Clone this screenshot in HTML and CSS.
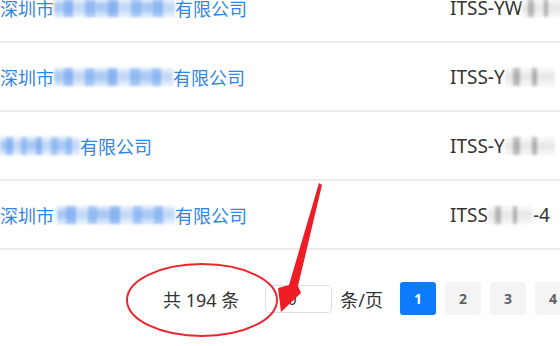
FILE: index.html
```html
<!DOCTYPE html>
<html lang="zh">
<head>
<meta charset="utf-8">
<link rel="stylesheet" href="styles.css">
</head>
<body>
<div class="page">
  <div class="table">
    <div class="row">
      <div class="cell name"><span>深圳市</span><span class="mosaic blue w121"></span><span>有限公司</span></div>
      <div class="cell code"><span>ITSS-YW</span><span class="mosaic grey w40"></span></div>
    </div>
    <div class="row">
      <div class="cell name"><span>深圳市</span><span class="mosaic blue w119"></span><span>有限公司</span></div>
      <div class="cell code"><span>ITSS-Y</span><span class="mosaic grey w50"></span></div>
    </div>
    <div class="row">
      <div class="cell name"><span class="mosaic blue w80"></span><span>有限公司</span></div>
      <div class="cell code"><span>ITSS-Y</span><span class="mosaic grey w50"></span></div>
    </div>
    <div class="row">
      <div class="cell name"><span>深圳市</span><span class="mosaic blue w120"></span><span>有限公司</span></div>
      <div class="cell code"><span>ITSS</span><span class="mosaic grey w45"></span><span>-4</span></div>
    </div>
  </div>
  <div class="pager">
    <span class="total">共 194 条</span>
    <span class="size-input">10</span>
    <span class="per">条/页</span>
    <span class="pnum active">1</span>
    <span class="pnum">2</span>
    <span class="pnum">3</span>
    <span class="pnum">4</span>
  </div>
  <svg class="annot" width="560" height="346" viewBox="0 0 560 346">
    <ellipse cx="202" cy="300" rx="75" ry="36" fill="none" stroke="#e8262b" stroke-width="2"/>
    <polygon points="319,183 322,185 298,286 301,293 281,312 278,288 289,285" fill="#ee1c25"/>
  </svg>
</div>
</body>
</html>
```
FILE: styles.css
```css
html, body {
  margin: 0;
  padding: 0;
  background: #ffffff;
}
body {
  font-family: "Noto Sans", "Noto Sans CJK SC", sans-serif;
  width: 560px;
  height: 346px;
  overflow: hidden;
}
.page {
  position: relative;
  width: 560px;
  height: 346px;
  overflow: hidden;
}
.table {
  margin-top: -26px;
}
.row {
  display: flex;
  align-items: center;
  height: 67px;
  border-bottom: 2px solid #ebebeb;
}
.cell {
  display: flex;
  align-items: center;
  font-size: 18px;
  white-space: nowrap;
}
.name {
  flex: none;
  width: 450px;
  color: #2f86e6;
}
.code {
  flex: 1;
  color: #333333;
  overflow: hidden;
  font-size: 19px;
}
.mosaic {
  flex: none;
  display: inline-block;
  height: 18px;
  filter: blur(1.5px);
}
.mosaic.blue {
  background:
    linear-gradient(90deg, rgba(255,255,255,0) 0 8%, rgba(110,160,238,0.55) 8% 16%, rgba(255,255,255,0.3) 16% 26%, rgba(120,168,240,0.5) 26% 34%, rgba(255,255,255,0) 34% 45%, rgba(105,158,236,0.55) 45% 53%, rgba(255,255,255,0.3) 53% 64%, rgba(120,170,240,0.5) 64% 72%, rgba(255,255,255,0) 72% 82%, rgba(110,165,238,0.5) 82% 90%, rgba(255,255,255,0.3) 90%),
    linear-gradient(180deg, #d3e4fa 0 25%, #aac9f4 25% 75%, #d0e2fa 75%);
}
.mosaic.grey {
  background:
    linear-gradient(90deg, rgba(255,255,255,0.6) 0 15%, rgba(150,150,150,0.5) 15% 30%, rgba(255,255,255,0.6) 30% 55%, rgba(140,140,140,0.5) 55% 65%, rgba(255,255,255,0.6) 65%),
    linear-gradient(180deg, #e6e6e6 0 30%, #c9c9c9 30% 70%, #e0e0e0 70%);
}
.w121 { width: 121px; }
.w119 { width: 119px; }
.w120 { width: 118px; margin-left: 3px; }
.w80 { width: 80px; }
.w40 { width: 40px; }
.w50 { width: 50px; }
.w45 { width: 45px; }
.pager {
  display: flex;
  align-items: center;
  height: 97px;
  padding-left: 163px;
  font-size: 18px;
  color: #333333;
  white-space: nowrap;
}
.pager > span {
  flex: none;
}
.total {
  margin-right: 26px;
}
.size-input {
  box-sizing: border-box;
  width: 67px;
  height: 28px;
  border: 1px solid #dcdfe6;
  border-radius: 4px;
  padding-left: 12px;
  font-size: 16px;
  line-height: 26px;
  color: #333333;
  margin-right: 8px;
}
.per {
  margin-right: 17px;
}
.pnum {
  width: 36px;
  height: 33px;
  margin-right: 9px;
  display: flex;
  align-items: center;
  justify-content: center;
  background: #f4f4f5;
  color: #606266;
  font-size: 14px;
  font-weight: 700;
  border-radius: 3px;
}
.pnum.active {
  background: #0d7bff;
  color: #ffffff;
}
.annot {
  position: absolute;
  left: 0;
  top: 0;
}
```
